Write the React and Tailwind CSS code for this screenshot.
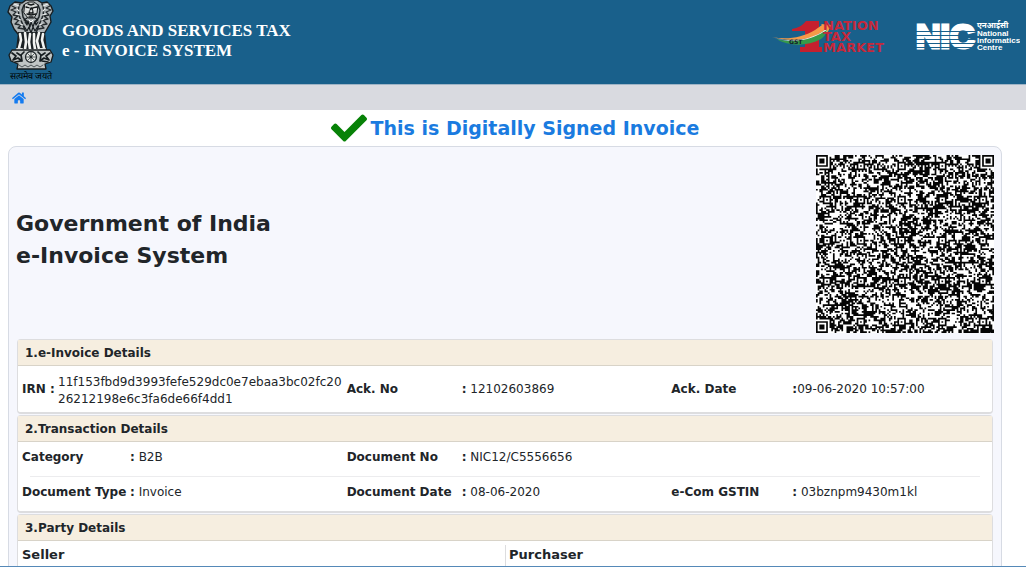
import { FaCheck, FaHome } from 'react-icons/fa'

const QR_SIZE = 105
const QR_ALIGN = [6, 26, 50, 74, 98]

const ackFields = [
  { label: 'Ack. No', value: '12102603869', width: 'w-[115px]' },
  { label: 'Ack. Date', value: '09-06-2020 10:57:00', width: 'w-[121px]', tight: true },
]

const transactionRows = [
  [
    { label: 'Category', value: 'B2B', width: 'w-[108px]' },
    { label: 'Document No', value: 'NIC12/C5556656', width: 'w-[115px]' },
  ],
  [
    { label: 'Document Type', value: 'Invoice', width: 'w-[108px]' },
    { label: 'Document Date', value: '08-06-2020', width: 'w-[115px]' },
    { label: 'e-Com GSTIN', value: '03bznpm9430m1kl', width: 'w-[121px]' },
  ],
]

// Finder marks have radius 3, alignment marks radius 2
function ring(x, y, cx, cy, radius) {
  const d = Math.max(Math.abs(x - cx), Math.abs(y - cy))
  if (radius === 3) {
    if (d > 4) return null
    return d === 3 || d <= 1
  }
  return d > 2 ? null : d !== 1
}

function buildQrPath() {
  let seed = 20200609
  const random = () => {
    seed = (seed + 0x6d2b79f5) | 0
    let t = Math.imul(seed ^ (seed >>> 15), 1 | seed)
    t = (t + Math.imul(t ^ (t >>> 7), 61 | t)) ^ t
    return ((t ^ (t >>> 14)) >>> 0) / 4294967296
  }
  const last = QR_SIZE - 4
  const finders = [[3, 3], [last, 3], [3, last]]
  const noise = []
  let path = ''

  for (let y = 0; y < QR_SIZE; y++) {
    noise.push([])
    for (let x = 0; x < QR_SIZE; x++) {
      // Some cells repeat a neighbour, so the cells form short runs
      const pick = random()
      let dark = random() < 0.51
      if (pick < 0.16 && x > 0) dark = noise[y][x - 1]
      else if (pick < 0.32 && y > 0) dark = noise[y - 1][x]
      noise[y].push(dark)

      if (x === 6) dark = y % 2 === 0
      if (y === 6) dark = x % 2 === 0
      for (const cx of QR_ALIGN) {
        for (const cy of QR_ALIGN) {
          const mark = ring(x, y, cx, cy, 2)
          if (mark !== null) dark = mark
        }
      }
      for (const [cx, cy] of finders) {
        const mark = ring(x, y, cx, cy, 3)
        if (mark !== null) dark = mark
      }
      if (dark) path += `M${x} ${y}h1v1h-1z`
    }
  }
  return path
}

const qrPath = buildQrPath()

function QrCode() {
  return (
    <svg className="w-[178px] h-[178px] shrink-0 bg-white" viewBox="0 0 105 105" role="img" aria-label="QR">
      <path d={qrPath} fill="#050505" />
    </svg>
  )
}

function Emblem() {
  return (
    <svg className="w-12 h-[70px]" viewBox="0 0 48 70" fill="none" strokeLinecap="round" strokeLinejoin="round">
      {/* Manes */}
      <path d="M15 3 19 0h11l5 3 5-1 4 4 2 5-3 5 1 6-4 7-3 5H11L7 29 4 22l1-5-4-5 2-6 5-4z" fill="#aeb4b6" stroke="#171d20" strokeWidth="1.4" />
      <path d="M13 4c-3 5-2 9 0 14l3 7 3 8M35 4c3 5 2 9 0 14l-3 7-3 8M17 5l-2 5 1 7 4 6M31 5l2 5-1 7-4 6" stroke="#20272a" strokeWidth="1.5" />
      <path d="M5 6l4 2-5 2 5 2-3 3 5 1-4 3 5 1-4 4 6 1-3 3 6 1M43 6l-4 2 5 2-5 2 3 3-5 1 4 3-5 1 4 4-6 1 3 3-6 1" stroke="#252b2e" strokeWidth="1.3" />
      <path d="M7 4l5 2M10 9l2 2M9 14l4 1M11 19l3 1M13 24l3 1M41 4l-5 2M38 9l-2 2M39 14l-4 1M37 19l-3 1M35 24l-3 1" stroke="#eef0ef" strokeWidth="1.1" />
      <path d="M18 22l2 3 1-4 2 6 1-5 2 5 2-6 1 4 2-3M17 26l3 5 2-4 2 6 2-6 2 4 3-5M20 18l-3 2 3 1M28 18l3 2-3 1" stroke="#171d20" strokeWidth="1.2" />
      {/* Middle face */}
      <path d="M18 4l4-2h5l4 3-1 8-3 5h-6l-4-5z" fill="#d5d8d6" stroke="#15191b" />
      <path d="M19 7l3 1M30 7l-4 1M24 8l-2 5h4l-1-5M20 14l4 1 5-1M22 17h4M21 4l3 1 3-1" stroke="#15191b" strokeWidth="1.4" />
      <path d="M20 9h2M27 9h2M23 11h2M22 20l2 2 2-2" stroke="#fff" />
      {/* Legs */}
      <path d="M11 32h27l2 18H9z" fill="#1a2023" />
      <path d="M13 34l1 6-2 8M18 33l1 9-1 7M23 34l-1 8 1 7M27 34v9l1 6M32 33l-2 8 2 8M36 34l-1 6 2 8" stroke="#f3f4f2" strokeWidth="2.6" />
      <path d="M10 49h5M17 50h4M22 50h3M27 50h4M33 49h5" stroke="#dfe1df" strokeWidth="2" />
      {/* Base with the wheel */}
      <path d="M5 50h38l3 5-2 7-6 2 1 5H10l1-5-7-3-2-6z" fill="#c0c5c5" stroke="#161b1e" strokeWidth="1.3" />
      <path d="M5 53l4 3-3 4 5-2 4 3-1-6 3-3M43 53l-4 3 3 4-5-2-4 3 1-6-3-3M10 53l3 2M38 53l-3 2M8 62l6-1M41 62l-6-1" stroke="#171d20" strokeWidth="1.7" />
      <circle cx="24" cy="57" r="5.5" fill="#e1e4e2" stroke="#20272a" strokeWidth="1.3" />
      <path d="M24 52v10M19 57h10M20.500 53.500l7 7M27.500 53.500l-7 7" stroke="#3b4245" strokeWidth=".8" />
      <circle cx="24" cy="57" r="1.4" fill="#20272a" />
      <path d="M12 65l3 2 3-2 3 2 3-2 3 2 3-2 3 2 3-2" stroke="#50575a" />
    </svg>
  )
}

function NationLogo() {
  return (
    <svg className="w-[132px] h-9" viewBox="0 0 132 36" role="img" aria-label="GST 1 Nation Tax Market">
      <path d="M20 11c6-1 10-3 14-8h13v26h3v5H28v-5h5V13H20z" fill="#c5202e" />
      <path d="M0 19c14 3 30 1 43-7l7-5-1-1 11 1-5 8-2-3c-12 9-30 13-53 7z" fill="#f59a48" />
      <path d="M2 20c16 5 34 2 48-6l4-3 1 3c-11 8-31 13-53 6z" fill="#f5f4e9" />
      <path d="M4 21c14 4 31 2 44-5l7-4c-1 4-3 7-6 9-13 7-31 8-45 0z" fill="#379a49" />
      <text x="17" y="26" fill="#111b2e" className="font-['DejaVu_Sans'] text-[6px] font-bold">GST</text>
      <g fill="#c5283a" className="font-['DejaVu_Sans'] text-[13px] font-bold">
        <text x="51" y="12">NATION</text>
        <text x="51" y="23">TAX</text>
        <text x="51" y="34">MARKET</text>
      </g>
    </svg>
  )
}

function NicLogo() {
  return (
    <svg className="w-[104px] h-9" viewBox="0 0 104 36" fill="#fff" role="img" aria-label="NIC">
      <text x="0" y="30" stroke="#fff" strokeWidth="3" className="font-['Liberation_Sans'] text-[34px] font-bold">NIC</text>
      <path d="M0 13.500h60M0 17.500h60M0 21.500h60M0 25.500h60M0 29.500h60" stroke="#19608b" strokeWidth="1.100" />
      <g className="font-['Liberation_Sans','Noto_Sans',sans-serif] text-[8px] font-bold">
        <text x="61" y="10">एनआईसी</text>
        <text x="61" y="18">National</text>
        <text x="61" y="25">Informatics</text>
        <text x="61" y="32">Centre</text>
      </g>
    </svg>
  )
}

function Field({ label, value, width, tight }) {
  return (
    <div className="flex items-center pl-1">
      <dt className={`${width} shrink-0 font-bold whitespace-nowrap`}>{label}</dt>
      <dd className="whitespace-nowrap"><b>:</b>{tight ? '' : ' '}{value}</dd>
    </div>
  )
}

function Section({ title, children }) {
  return (
    <section className="mb-px rounded-sm border border-b-2 border-[#dddddf] bg-white">
      <h2 className="h-[26px] border-b border-[#d8d3c8] bg-[#f6eee0] px-[7px] text-xs leading-[26px] font-bold">{title}</h2>
      {children}
    </section>
  )
}

function App() {
  return (
    <div className="flex h-screen flex-col overflow-hidden border-b border-[#5589b8] bg-white font-['DejaVu_Sans',Verdana,sans-serif] text-[#212529]">
      <header className="flex h-[84px] shrink-0 items-start justify-between bg-[#19608b] pl-[7px] pr-[6px]">
        <div className="flex">
          <div className="flex w-12 flex-col items-center">
            <Emblem />
            <span className="text-[9px] leading-3 whitespace-nowrap text-black">सत्यमेव जयते</span>
          </div>
          <h1 className="ml-[7px] mt-[21px] font-['Liberation_Serif',serif] text-[17px] leading-5 font-bold text-white">
            GOODS AND SERVICES TAX<br />e - INVOICE SYSTEM
          </h1>
        </div>
        <div className="mt-[18px] flex gap-3">
          <NationLogo />
          <NicLogo />
        </div>
      </header>

      <nav className="flex h-[26px] shrink-0 items-center border-t border-[#9fb4c6] bg-[#d9dae0] px-3">
        <a href="#" aria-label="Home" className="text-[#147bf0]"><FaHome size={14} /></a>
      </nav>

      <main className="min-h-0 flex-1 overflow-hidden pl-2 pr-6">
        <div className="flex h-9 items-center justify-center gap-1 pl-5 text-[19px] font-bold text-[#1a7be0]">
          <FaCheck size={36} color="#078207" />
          <p>This is Digitally Signed Invoice</p>
        </div>

        <div className="rounded-lg border border-[#d7dbe4] bg-[#f6f7fd] px-[7px] pt-2">
          <div className="flex items-center justify-between">
            <h2 className="-mt-2 text-[22px] leading-8 font-bold">
              Government of India<br />e-Invoice System
            </h2>
            <QrCode />
          </div>

          <div className="mx-px mt-[6px] text-xs">
            <Section title="1.e-Invoice Details">
              <dl className="grid min-h-[46px] grid-cols-3">
                <div className="flex items-center pl-1">
                  <dt className="w-9 shrink-0 font-bold whitespace-nowrap">IRN :</dt>
                  <dd className="w-[286px] shrink-0 pt-[3px] leading-[17px] break-all">11f153fbd9d3993fefe529dc0e7ebaa3bc02fc2026212198e6c3fa6de66f4dd1</dd>
                </div>
                {ackFields.map((field) => (
                  <Field key={field.label} {...field} />
                ))}
              </dl>
            </Section>

            <Section title="2.Transaction Details">
              {transactionRows.map((row, i) => (
                <div key={i}>
                  {i > 0 && <hr className="mx-3 border-[#ececee]" />}
                  <dl className="grid h-[34px] grid-cols-3 pb-[5px]">
                    {row.map((field) => (
                      <Field key={field.label} {...field} />
                    ))}
                  </dl>
                </div>
              ))}
            </Section>

            <Section title="3.Party Details">
              <div className="grid min-h-24 grid-cols-2 pt-1 text-[13px] leading-5 font-bold">
                <h3 className="pl-1">Seller</h3>
                <h3 className="border-l border-[#dddddf] pl-[3px]">Purchaser</h3>
              </div>
            </Section>
          </div>
        </div>
      </main>
    </div>
  )
}

export default App
